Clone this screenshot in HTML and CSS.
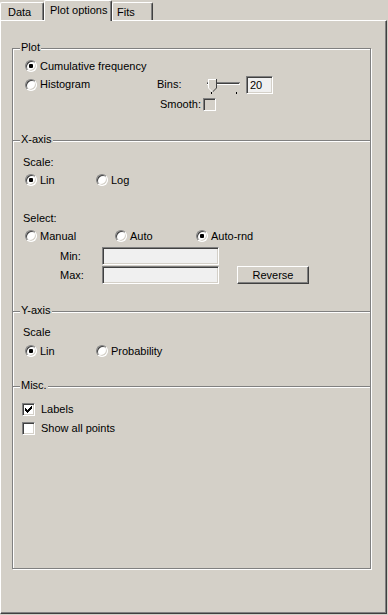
FILE: index.html
```html
<!DOCTYPE html>
<html lang="en">
<head>
    <meta charset="UTF-8">
    <title>Plot options</title>
    <link rel="stylesheet" href="styles.css">
</head>
<body>
    <div class="tabs">
        <div class="tab tab-data">Data</div>
        <div class="tab tab-plot active">Plot options</div>
        <div class="tab tab-fits">Fits</div>
    </div>
    <div class="panel">
        <div class="group">
            <div class="section plot">
                <span class="legend">Plot</span>
                <div class="row radios">
                    <label class="opt"><span class="radio checked"></span>Cumulative frequency</label>
                </div>
                <div class="row radios hist-row">
                    <label class="opt opt-hist"><span class="radio"></span>Histogram</label>
                    <span class="bins-label">Bins:</span>
                    <svg class="slider" width="40" height="19" viewBox="0 0 40 19" shape-rendering="crispEdges">
                        <rect x="3" y="7" width="33" height="1" fill="#808080"/>
                        <rect x="3" y="8" width="32" height="1" fill="#404040"/>
                        <rect x="3" y="9" width="33" height="1" fill="#fff"/>
                        <polygon points="4,4 13,4 13,13 8.5,17.5 4,13" fill="#d4d0c8"/>
                        <polyline points="4.5,13 4.5,4.5 12.5,4.5" fill="none" stroke="#fff"/>
                        <polyline points="12.5,4 12.5,13 8.5,17" fill="none" stroke="#404040" shape-rendering="auto"/>
                        <polyline points="4.5,13 8.5,17" fill="none" stroke="#fff" shape-rendering="auto"/>
                        <rect x="7" y="17" width="1" height="2" fill="#000"/>
                        <rect x="32" y="17" width="1" height="2" fill="#000"/>
                    </svg>
                    <span class="field bins">20</span>
                </div>
                <div class="row smooth-row">
                    <span class="smooth-label">Smooth:</span>
                    <span class="check disabled"></span>
                </div>
            </div>

            <div class="section xaxis">
                <span class="legend">X-axis</span>
                <div class="row">Scale:</div>
                <div class="row radios gap2">
                    <label class="opt opt-lin"><span class="radio checked"></span>Lin</label>
                    <label class="opt"><span class="radio"></span>Log</label>
                </div>
                <div class="row select-row">Select:</div>
                <div class="row radios gap2">
                    <label class="opt opt-manual"><span class="radio"></span>Manual</label>
                    <label class="opt opt-auto"><span class="radio"></span>Auto</label>
                    <label class="opt"><span class="radio checked"></span>Auto-rnd</label>
                </div>
                <div class="range-row min-row">
                    <span class="range-label">Min:</span>
                    <span class="field range"></span>
                </div>
                <div class="range-row max-row">
                    <span class="range-label">Max:</span>
                    <span class="field range"></span>
                    <button class="btn">Reverse</button>
                </div>
            </div>

            <div class="section yaxis">
                <span class="legend">Y-axis</span>
                <div class="row">Scale</div>
                <div class="row radios gap3">
                    <label class="opt opt-lin"><span class="radio checked"></span>Lin</label>
                    <label class="opt"><span class="radio"></span>Probability</label>
                </div>
            </div>

            <div class="section misc">
                <span class="legend">Misc.</span>
                <div class="check-row">
                    <span class="check checked">
                        <svg width="9" height="9" viewBox="0 0 9 9" shape-rendering="crispEdges">
                            <rect x="1" y="3" width="1" height="3"/>
                            <rect x="2" y="4" width="1" height="3"/>
                            <rect x="3" y="5" width="1" height="3"/>
                            <rect x="4" y="4" width="1" height="3"/>
                            <rect x="5" y="3" width="1" height="3"/>
                            <rect x="6" y="2" width="1" height="3"/>
                            <rect x="7" y="1" width="1" height="3"/>
                        </svg>
                    </span>
                    Labels
                </div>
                <div class="check-row second">
                    <span class="check"></span>
                    Show all points
                </div>
            </div>
        </div>
    </div>
</body>
</html>
```

FILE: styles.css
```css
*{
    box-sizing: border-box;
}
body{
    margin: 0;
    width: 388px;
    height: 615px;
    overflow: hidden;
    background: #d4d0c8;
    color: #000;
    font-family: "Liberation Sans", Arial, sans-serif;
    font-size: 11px;
    line-height: 13px;
}

/* tabs */
.tabs{
    display: flex;
    align-items: flex-start;
    height: 20px;
}
.tab{
    height: 18px;
    margin-top: 2px;
    padding-top: 3px;
    border: 1px solid;
    border-color: #fff #404040 transparent #fff;
    border-bottom: 0;
    border-radius: 2px 2px 0 0;
    box-shadow: inset -1px 0 0 #808080;
    white-space: nowrap;
}
.tab-data{
    width: 44px;
    padding-left: 7px;
}
.tab-plot{
    width: 68px;
    padding-left: 5px;
}
.tab-fits{
    width: 41px;
    padding-left: 4px;
}
.tab.active{
    position: relative;
    z-index: 2;
    height: 21px;
    margin-top: 0;
    background: #d4d0c8;
}

/* panel */
.panel{
    width: 387px;
    height: 594px;
    border: 1px solid;
    border-color: #fff #404040 #404040 #fff;
    box-shadow: inset -1px -1px 0 #808080;
    padding: 27px 0 0 11px;
}
.group{
    width: 359px;
    height: 521px;
    border: 1px solid #808080;
    border-top: 0;
    box-shadow: 1px 1px 0 #fff, inset 1px 0 0 #fff;
    display: flex;
    flex-direction: column;
}
.section{
    position: relative;
    border-top: 1px solid #808080;
    box-shadow: inset 0 1px 0 #fff;
    padding-left: 10px;
}
.legend{
    position: absolute;
    top: -8px;
    left: 7px;
    padding: 0 1px;
    background: #d4d0c8;
}
.plot{
    height: 92px;
    padding-top: 9px;
}
.xaxis{
    height: 171px;
    padding-top: 13px;
}
.yaxis{
    height: 75px;
    padding-top: 12px;
}
.misc{
    flex-grow: 1;
    padding-top: 15px;
}

/* rows */
.row{
    display: flex;
    align-items: center;
    height: 16px;
}
.radios{
    padding-left: 2px;
}
.gap2{
    margin-top: 2px;
}
.gap3{
    margin-top: 3px;
}
.select-row{
    margin-top: 22px;
}
.opt{
    display: flex;
    align-items: center;
    gap: 3px;
    white-space: nowrap;
}
.opt-hist{
    width: 132px;
}
.opt-lin{
    width: 71px;
}
.opt-manual{
    width: 90px;
}
.opt-auto{
    width: 81px;
}
.hist-row{
    height: 19px;
    margin-top: 1px;
}
.bins-label{
    width: 47px;
}
.slider{
    display: block;
    flex-shrink: 0;
}
.smooth-row{
    height: 15px;
    margin-top: 3px;
    padding-left: 137px;
}
.smooth-label{
    width: 43px;
}

/* controls */
.radio{
    position: relative;
    display: inline-block;
    width: 12px;
    height: 12px;
    border-radius: 50%;
    border: 1px solid;
    border-color: #808080 #fff #fff #808080;
    background: #fff;
    box-shadow: inset 1px 1px 0 #404040, inset -1px -1px 0 #d4d0c8;
    flex-shrink: 0;
}
.radio.checked::after{
    content: '';
    position: absolute;
    top: 3px;
    left: 3px;
    width: 4px;
    height: 4px;
    border-radius: 1px;
    background: #000;
}
.check{
    display: inline-flex;
    align-items: center;
    justify-content: center;
    width: 13px;
    height: 13px;
    border: 1px solid;
    border-color: #808080 #fff #fff #808080;
    background: #fff;
    box-shadow: inset 1px 1px 0 #404040, inset -1px -1px 0 #d4d0c8;
    flex-shrink: 0;
}
.check svg{
    display: block;
}
.check.disabled{
    background: #d4d0c8;
}
.field{
    display: block;
    height: 18px;
    border: 1px solid;
    border-color: #808080 #fff #fff #808080;
    background: #f0f0f0;
    box-shadow: inset 1px 1px 0 #404040, inset -1px -1px 0 #d4d0c8;
    padding: 2px 0 0 3px;
}
.bins{
    width: 27px;
    margin-left: 2px;
}
.range-row{
    display: flex;
    align-items: center;
    height: 18px;
    padding-left: 37px;
}
.min-row{
    margin-top: 3px;
}
.max-row{
    margin-top: 1px;
}
.range-label{
    width: 42px;
}
.range{
    width: 117px;
}
.btn{
    width: 72px;
    height: 18px;
    margin-left: 18px;
    padding: 0;
    font: inherit;
    color: #000;
    background: #d4d0c8;
    border: 1px solid;
    border-color: #fff #404040 #404040 #fff;
    box-shadow: inset -1px -1px 0 #808080;
}
.check-row{
    display: flex;
    align-items: center;
    gap: 6px;
    height: 15px;
    margin-left: -1px;
}
.check-row.second{
    margin-top: 4px;
}
```
